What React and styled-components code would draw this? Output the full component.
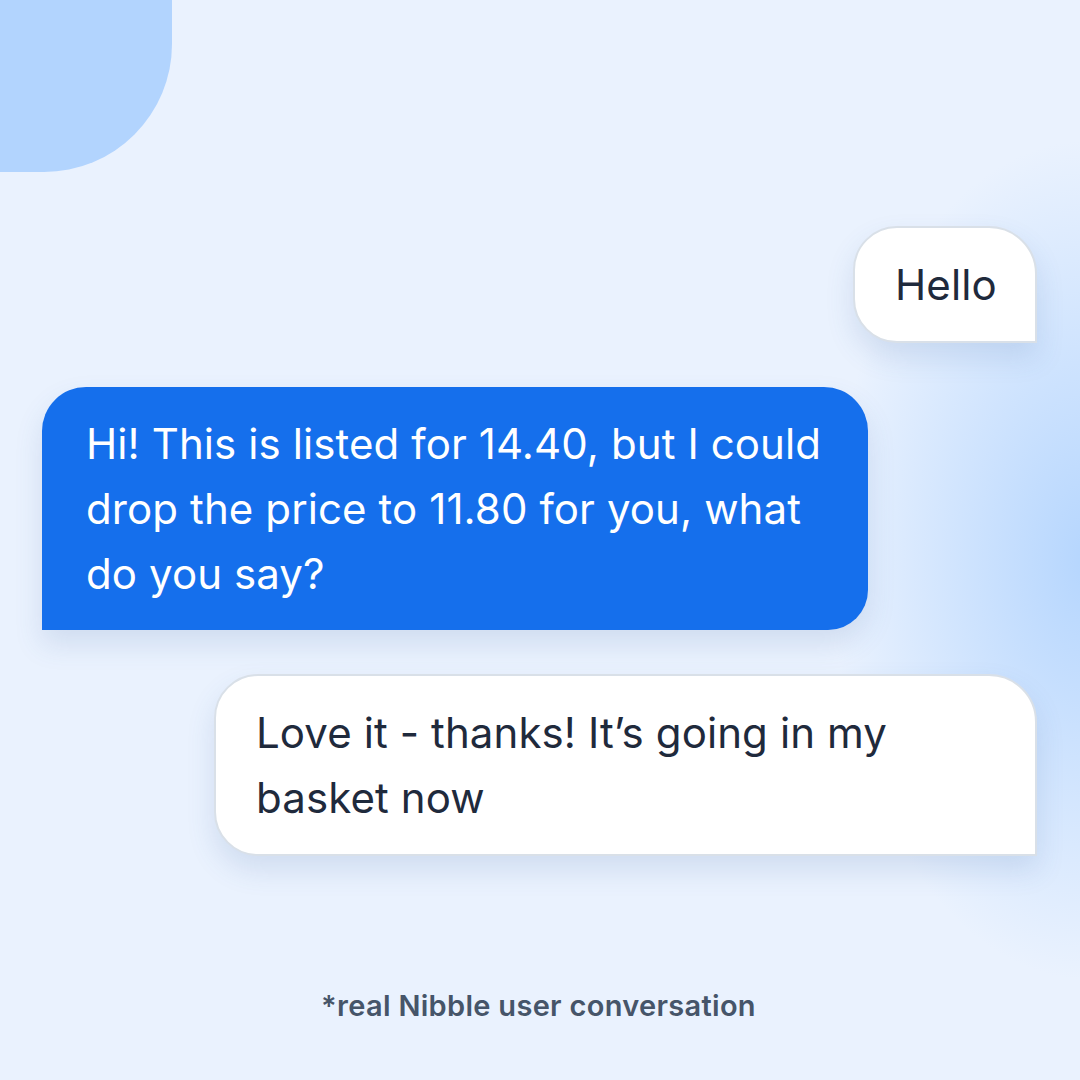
import React from "react"
import styled, { createGlobalStyle } from "styled-components"

const GlobalStyle = createGlobalStyle`
  html, body {
    margin: 0;
    padding: 0;
  }
  body {
    font-family: Inter, "Noto Sans", "Liberation Sans", sans-serif;
  }
`

const Page = styled.div`
  position: relative;
  width: 1080px;
  height: 1080px;
  overflow: hidden;
  box-sizing: border-box;
  padding: 226px 43px 0 42px;
  display: flex;
  flex-direction: column;
  background:
    radial-gradient(ellipse 260px 420px at 1090px 560px, rgba(178, 212, 254, 0.95), rgba(178, 212, 254, 0) 100%),
    #eaf2fe;

  &::before {
    content: "";
    position: absolute;
    top: 0;
    left: 0;
    width: 172px;
    height: 172px;
    background: #b2d4fe;
    border-bottom-right-radius: 128px;
  }
`

const Thread = styled.div`
  display: flex;
  flex-direction: column;
  gap: 44px;
`

const Bubble = styled.div`
  box-sizing: border-box;
  align-self: ${(p) => (p.$mine ? "flex-end" : "flex-start")};
  width: ${(p) => p.$width}px;
  padding: 24px ${(p) => p.$padX}px;
  font-size: 42px;
  line-height: 65px;
  letter-spacing: 0.1px;
  white-space: nowrap;
  color: ${(p) => (p.$mine ? "#1f2a3c" : "#ffffff")};
  background: ${(p) => (p.$mine ? "#ffffff" : "#156fec")};
  border: ${(p) => (p.$mine ? "2px solid #d9e0e8" : "none")};
  border-radius: ${(p) => (p.$mine ? "44px 48px 0 44px" : "44px 44px 40px 0")};
  box-shadow: 0 14px 28px rgba(60, 100, 160, 0.15);
`

const Footnote = styled.div`
  margin-top: auto;
  margin-bottom: 57px;
  align-self: center;
  padding-right: 2px;
  font-size: 29px;
  font-weight: 600;
  color: #465569;
  letter-spacing: 0.3px;
`

export default function App() {
  return (
    <>
      <GlobalStyle />
      <Page>
        <Thread>
          <Bubble $mine $width={184} $padX={40}>Hello</Bubble>
          <Bubble $width={826} $padX={44}>
            Hi! This is listed for 14.40, but I could
            <br />
            drop the price to 11.80 for you, what
            <br />
            do you say?
          </Bubble>
          <Bubble $mine $width={823} $padX={40}>
            Love it - thanks! It’s going in my
            <br />
            basket now
          </Bubble>
        </Thread>
        <Footnote>*real Nibble user conversation</Footnote>
      </Page>
    </>
  )
}
